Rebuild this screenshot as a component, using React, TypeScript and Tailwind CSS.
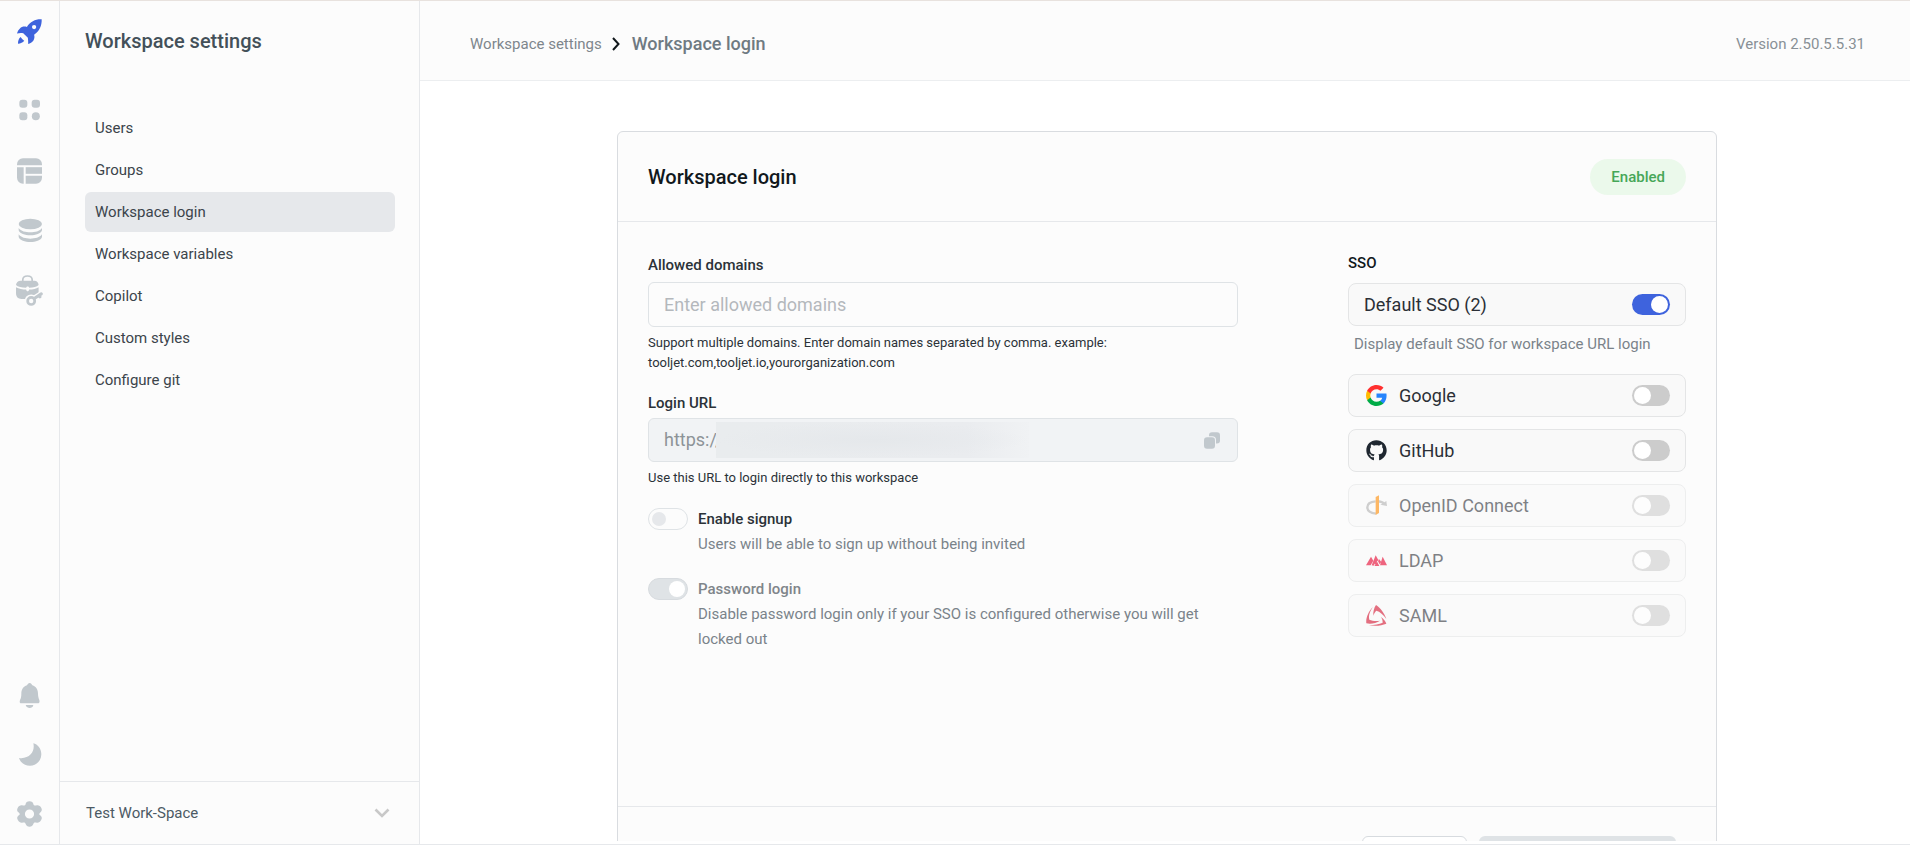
import React, { useState } from "react";
import { FaGithub } from "react-icons/fa";

const NAV = ["Users", "Groups", "Workspace login", "Workspace variables", "Copilot", "Custom styles", "Configure git"];

function RocketIcon() {
  return (
    <svg viewBox="0 0 76 76" className="size-[25px]" fill="#3e63dd">
      <path
        fillRule="evenodd"
        d="M75 1C56 0 41 8 30 24C22 22 14 23 9 29C5 33 2 37 0 44C7 42 13 42 19 43L33 57C34 63 34 69 34 76C40 74 46 71 50 65C53 60 54 54 52 48C68 37 76 20 75 1ZM52 18A6.500 6.500 0 1 1 52 31A6.500 6.500 0 1 1 52 18Z"
      />
      <path d="M11 55C15 60 18 64 22 66C18 72 11 74 3 75C3 67 5 60 11 55Z" />
    </svg>
  );
}

function AppsIcon() {
  return (
    <svg viewBox="0 0 75 75" className="size-[25px]" fill="#c1c8cd">
      <rect x="7" y="5" width="24" height="24" rx="9" />
      <rect x="44" y="5" width="25" height="24" rx="9" />
      <rect x="7" y="43" width="24" height="24" rx="9" />
      <circle cx="56.500" cy="55" r="12" />
    </svg>
  );
}

function TableIcon() {
  return (
    <svg viewBox="0 0 75 77" className="h-[26px] w-[25px]" fill="#c1c8cd">
      <path d="M18 0H57A18 18 0 0 1 75 18V21H0V18A18 18 0 0 1 18 0Z" />
      <path d="M0 27H20V77H18A18 18 0 0 1 0 59Z" />
      <path d="M26 27H75V47H26Z" />
      <path d="M26 53H75V59A18 18 0 0 1 57 77H26Z" />
    </svg>
  );
}

function DatabaseIcon() {
  return (
    <svg viewBox="0 0 75 75" className="size-[25px]" fill="#c1c8cd">
      <ellipse cx="40" cy="18" rx="35" ry="15.500" />
      <path d="M5 30C12 40 26 43 40 43S68 40 75 30V37C72 47 56 52 40 52S8 47 5 37Z" />
      <path d="M5 49C12 59 26 62 40 62S68 59 75 49V57C72 67 56 72 40 72S8 67 5 57Z" />
    </svg>
  );
}

function ToolboxIcon() {
  return (
    <svg viewBox="0 0 80 92" className="h-[31px] w-[27px]" fill="#c1c8cd">
      <path d="M20 20V15C20 7 26 3 34 3S48 7 48 15V20" fill="none" stroke="#c1c8cd" strokeWidth="5" />
      <path d="M14 17H54C62 17 67 23 67 30C62 36 51 38 39 38C38 33 31 33 30 38C17 38 5 36 0 30C0 23 6 17 14 17Z" />
      <path d="M0 36C8 41 20 43 30 43C31 50 38 50 39 43C50 43 60 41 67 36V54C67 64 61 71 51 71H16C6 71 0 64 0 54Z" />
      <g fill="none" stroke="#fcfcfc" strokeWidth="17" strokeLinecap="round">
        <circle cx="45" cy="77" r="11" />
        <path d="M55 69L74 57" />
      </g>
      <circle cx="45" cy="77" r="10.500" fill="none" stroke="#c1c8cd" strokeWidth="8" />
      <path d="M54 70L75 56M68 61L71 65" fill="none" stroke="#c1c8cd" strokeWidth="9" strokeLinecap="round" />
    </svg>
  );
}

function BellIcon() {
  return (
    <svg viewBox="0 0 75 75" className="size-[25px]" fill="#c1c8cd">
      <path d="M38 0C42 0 44 3 46 7C57 10 63 20 63 32C63 40 65 45 67 51C69 58 67 61 61 61H14C8 61 7 58 9 51C12 45 13 40 13 32C13 20 19 10 30 7C32 3 34 0 38 0Z" />
      <path d="M26 66H49C48 73 43 75 38 75S28 73 26 66Z" />
    </svg>
  );
}

function MoonIcon() {
  return (
    <svg viewBox="0 0 75 75" className="size-[25px]" fill="#c1c8cd">
      <path d="M49 4C62 7 73 20 73 37C73 56 58 71 39 71C23 71 10 62 6 48C20 50 33 46 41 37C49 28 52 16 49 4Z" />
    </svg>
  );
}

function GearIcon() {
  return (
    <svg viewBox="0 0 76 78" className="h-[26px] w-[25px]" fill="#c1c8cd">
      <path
        fillRule="evenodd"
        d="M38 0C45 0 49 3 50 9C51 13 54 14 58 13C65 11 71 14 74 21C77 27 75 32 70 35C67 38 67 41 70 43C76 47 77 52 73 58C70 64 64 67 58 65C54 64 51 65 50 69C48 75 44 78 38 78S28 75 26 69C25 65 22 64 18 65C12 67 6 64 3 58C-1 52 0 47 6 43C9 41 9 38 6 35C0 32 -1 27 2 21C5 14 11 11 18 13C22 14 25 13 26 9C27 3 31 0 38 0ZM38 25A14 14 0 1 0 38 53A14 14 0 1 0 38 25Z"
      />
    </svg>
  );
}

function GoogleIcon() {
  return (
    <svg viewBox="1 1 22 22" className="size-[21px]">
      <path fill="#2684fc" d="M22.560 12.250c0-.780-.070-1.530-.200-2.250H12v4.260h5.920c-.260 1.370-1.040 2.530-2.210 3.310v2.770h3.570c2.080-1.920 3.280-4.740 3.280-8.090z" />
      <path fill="#00ac47" d="M12 23c2.970 0 5.460-.980 7.280-2.660l-3.570-2.770c-.980.660-2.230 1.060-3.710 1.060-2.860 0-5.290-1.930-6.160-4.530H2.180v2.840C3.990 20.530 7.700 23 12 23z" />
      <path fill="#ffba00" d="M5.840 14.090c-.220-.660-.350-1.360-.350-2.090s.130-1.430.350-2.090V7.070H2.180C1.430 8.550 1 10.220 1 12s.430 3.450 1.180 4.930l3.660-2.840z" />
      <path fill="#ff302f" d="M12 5.380c1.620 0 3.060.560 4.210 1.640l3.150-3.150C17.450 2.090 14.970 1 12 1 7.700 1 3.990 3.470 2.180 7.070l3.660 2.840c.870-2.600 3.300-4.530 6.160-4.530z" />
    </svg>
  );
}

function OpenIdIcon() {
  return (
    <svg viewBox="0 0 63 63" className="size-[21px]">
      <path d="M29 19C12 20 4 28 4 37C4 47 14 54 30 56" fill="none" stroke="#b0b0b0" strokeWidth="7" />
      <path d="M39 16C46 17 51 19 55 22L61 18L63 33L43 29L49 26C46 24 43 23 39 23Z" fill="#b0b0b0" />
      <path d="M29 6L39 1V54L29 60Z" fill="#ff8a00" />
    </svg>
  );
}

function LdapIcon() {
  return (
    <svg viewBox="0 0 63 63" className="size-[21px]" fill="#e6002c">
      <path d="M0 46L15 20L22 32L14 46Z" />
      <path d="M17 46L29 16L37 30L32 36L37 47L26 41L23 47Z" />
      <path d="M36 34L39 27L46 36L41 43Z" />
      <path d="M26 46L34 36L40 48H26Z" />
      <path d="M42 46L50 20L63 46Z" />
    </svg>
  );
}

function SamlIcon() {
  return (
    <svg viewBox="0 0 63 63" className="size-[21px]" fill="#d4122e">
      <path d="M30 0C41 7 55 23 61 42C52 29 42 20 31 17C27 20 24 26 22 32C21 20 24 9 30 0Z" />
      <path d="M20 7C10 22 7 34 10 44C19 48 30 49 42 47C30 55 14 58 1 55C-1 40 7 20 20 7Z" />
      <path d="M45 36C53 42 59 49 61 56C47 62 26 64 9 60C25 60 40 58 50 53C50 47 49 42 45 36Z" />
    </svg>
  );
}

function CopyIcon() {
  return (
    <svg viewBox="0 0 48 50" className="h-[17px] w-4">
      <rect x="15" y="0" width="33" height="34" rx="9" fill="#c1c8cd" />
      <rect x="-3" y="12" width="39" height="41" rx="11" fill="#f1f3f5" />
      <rect x="0" y="15" width="33" height="35" rx="9" fill="#c1c8cd" />
    </svg>
  );
}

type Provider = { id: string; name: string; icon?: React.ReactNode; disabled?: boolean };

const PROVIDERS: Provider[] = [
  { id: "google", name: "Google", icon: <GoogleIcon /> },
  { id: "github", name: "GitHub", icon: <FaGithub className="size-[21px] text-[#1f2730]" /> },
  { id: "openid", name: "OpenID Connect", icon: <OpenIdIcon />, disabled: true },
  { id: "ldap", name: "LDAP", icon: <LdapIcon />, disabled: true },
  { id: "saml", name: "SAML", icon: <SamlIcon />, disabled: true },
];

function ProviderRow({ id, name, icon, disabled, defaultChecked }: Provider & { defaultChecked?: boolean }) {
  return (
    <label
      htmlFor={id}
      className={`flex h-[43px] items-center rounded-lg border border-[#e4e5e6] bg-[#f9f9f9] px-[15px] ${disabled ? "opacity-60" : ""}`}
    >
      {icon && <span className="mr-3 ml-0.5">{icon}</span>}
      <span className="flex-1 text-lg leading-6 text-[#2b2f36]">{name}</span>
      <input
        id={id}
        type="checkbox"
        role="switch"
        disabled={disabled}
        defaultChecked={defaultChecked}
        className="h-[21px] w-[38px] appearance-none rounded-full bg-[#cccccc] p-0.5 before:block before:size-[17px] before:rounded-full before:bg-white checked:bg-[#3e63dd] checked:before:translate-x-[17px]"
      />
    </label>
  );
}

const RAIL_BUTTON = "flex size-[49px] items-center justify-center";

export default function App() {
  const [active, setActive] = useState("Workspace login");

  return (
    <div className="flex h-screen flex-col overflow-hidden border-t border-b border-t-[#e8e2de] border-b-[#e6e8eb] bg-white font-[Roboto,sans-serif] text-[15px] leading-5">
      <div className="flex min-h-0 flex-1">
        <aside className="flex w-[60px] shrink-0 flex-col items-center border-r border-[#e6e8eb] bg-[#fcfcfc]">
          <a href="#home" aria-label="Home" className="flex h-[60px] items-center justify-center">
            <RocketIcon />
          </a>
          <nav aria-label="Main" className="mt-[25px] flex flex-col gap-[11px]">
            <a href="#apps" aria-label="Apps" className={RAIL_BUTTON}><AppsIcon /></a>
            <a href="#tables" aria-label="Tables" className={RAIL_BUTTON}><TableIcon /></a>
            <a href="#data" aria-label="Data sources" className={RAIL_BUTTON}><DatabaseIcon /></a>
            <a href="#constants" aria-label="Workspace constants" className={RAIL_BUTTON}><ToolboxIcon /></a>
          </nav>
          <div className="mt-auto mb-1.5 flex flex-col gap-[10px]">
            <button type="button" aria-label="Notifications" className={RAIL_BUTTON}><BellIcon /></button>
            <button type="button" aria-label="Dark mode" className={RAIL_BUTTON}><MoonIcon /></button>
            <button type="button" aria-label="Settings" className={RAIL_BUTTON}><GearIcon /></button>
          </div>
        </aside>

        <aside className="flex w-[360px] shrink-0 flex-col border-r border-[#e6e8eb] bg-[#fcfcfc]">
          <h2 className="px-[25px] pt-6 text-xl leading-8 font-medium text-[#435059]">Workspace settings</h2>
          <nav aria-label="Workspace settings" className="mt-[51px] flex flex-col gap-0.5 pr-6 pl-[25px]">
            {NAV.map((item) => (
              <a
                key={item}
                href={`#${item.toLowerCase().replace(" ", "-")}`}
                onClick={() => setActive(item)}
                className={`flex h-10 items-center rounded-md px-[10px] text-[#3b444b] ${item === active ? "bg-[#e6e8eb]" : ""}`}
              >
                {item}
              </a>
            ))}
          </nav>
          <button
            type="button"
            className="mt-auto flex h-[63px] items-center justify-between border-t border-[#e6e8eb] pr-[29px] pl-[26px] text-[#4c5a64]"
          >
            Test Work-Space
            <svg viewBox="0 0 16 10" className="h-[10px] w-4" fill="none" stroke="#c8c8c8" strokeWidth="2.600">
              <path d="M1.500 1.500L8 8L14.500 1.500" />
            </svg>
          </button>
        </aside>

        <div className="flex min-w-0 flex-1 flex-col">
          <header className="flex h-20 shrink-0 items-center justify-between border-b border-[#eceef0] bg-[#fcfcfc] pt-1.5 pr-[45px] pl-[50px] text-[#7e868c]">
            <nav aria-label="Breadcrumb" className="flex items-center">
              <a href="#settings">Workspace settings</a>
              <svg viewBox="0 0 8 14" className="mr-3 ml-[10px] h-[14px] w-2" fill="none" stroke="#11181c" strokeWidth="2">
                <path d="M1 1L6.500 7L1 13" />
              </svg>
              <span className="text-lg leading-6 font-medium text-[#6f7a82]">Workspace login</span>
            </nav>
            <span className="text-[#889096]">Version 2.50.5.5.31</span>
          </header>

          <main className="mb-[3px] min-h-0 flex-1 overflow-hidden pt-[50px] pl-1">
            <form className="mx-auto max-w-[1100px] rounded-t-md border border-[#d9dce0] bg-[#fcfcfc]">
              <div className="flex h-[90px] items-center justify-between border-b border-[#e6e8eb] px-[30px]">
                <h1 className="text-xl leading-8 font-medium text-[#11181c]">Workspace login</h1>
                <span className="rounded-full bg-[#ebf9eb] px-[21px] py-2 leading-5 font-medium text-[#46a758]">Enabled</span>
              </div>

              <div className="flex min-h-[585px] justify-between border-b border-[#e6e8eb] px-[30px] pt-8">
                <div className="w-[590px]">
                  <label htmlFor="domains" className="mb-1.5 block leading-[22px] font-medium text-[#2b3238]">Allowed domains</label>
                  <input
                    id="domains"
                    type="text"
                    placeholder="Enter allowed domains"
                    className="h-[45px] w-full rounded-md border border-[#dfe3e6] bg-[#fcfcfc] px-[15px] text-lg placeholder:text-[#b4b8bc]"
                  />
                  <p className="mt-1.5 text-[13px] text-[#2b3238]">
                    Support multiple domains. Enter domain names separated by comma. example: tooljet.com,tooljet.io,yourorganization.com
                  </p>

                  <label htmlFor="login-url" className="mt-[19px] mb-1 block leading-[22px] font-medium text-[#2b3238]">Login URL</label>
                  <div className="relative flex h-11 items-center rounded-md border border-[#dfe3e6] bg-[#f1f3f5] pr-[17px] pl-[15px]">
                    <input id="login-url" type="text" readOnly value="https://" className="min-w-0 flex-1 text-lg text-[#8d9398]" />
                    <div className="absolute left-[67px] h-9 w-[313px] bg-linear-to-r from-[#e9ecee] via-[#eaecef] via-80% to-[#f0f2f4]">
                      <div className="h-full bg-radial from-[#e5e8eb] to-transparent to-70%" />
                    </div>
                    <button type="button" aria-label="Copy login URL"><CopyIcon /></button>
                  </div>
                  <p className="mt-1.5 text-[13px] text-[#2b3238]">Use this URL to login directly to this workspace</p>

                  <div className="mt-5 flex flex-col gap-[21px]">
                    <div className="flex gap-[10px]">
                      <input
                        id="signup"
                        type="checkbox"
                        role="switch"
                        className="h-[22px] w-10 shrink-0 appearance-none rounded-full border border-[#dfe3e6] bg-[#fcfcfc] p-[3px] before:block before:size-[14px] before:rounded-full before:bg-[#e6e8eb] checked:before:translate-x-[18px]"
                      />
                      <div>
                        <label htmlFor="signup" className="block leading-[22px] font-medium text-[#2b3238]">Enable signup</label>
                        <p className="mt-0.5 leading-[25px] text-[#7a838a]">Users will be able to sign up without being invited</p>
                      </div>
                    </div>
                    <div className="flex gap-[10px]">
                      <input
                        id="password-login"
                        type="checkbox"
                        role="switch"
                        defaultChecked
                        disabled
                        className="h-[22px] w-10 shrink-0 appearance-none rounded-full border border-[#d7dbdf] bg-[#dfe3e6] p-0.5 before:block before:size-4 before:rounded-full before:bg-white checked:before:translate-x-[18px]"
                      />
                      <div>
                        <label htmlFor="password-login" className="block leading-[22px] font-medium text-[#7f858a]">Password login</label>
                        <p className="mt-0.5 leading-[25px] text-[#7a838a]">
                          Disable password login only if your SSO is configured otherwise you will get locked out
                        </p>
                      </div>
                    </div>
                  </div>
                </div>

                <section aria-labelledby="sso-title" className="w-[338px]">
                  <h2 id="sso-title" className="mb-[11px] leading-[18px] font-medium text-[#11181c]">SSO</h2>
                  <ProviderRow id="default-sso" name="Default SSO (2)" defaultChecked />
                  <p className="mt-2 px-1.5 text-[#7a838a]">Display default SSO for workspace URL login</p>
                  <div className="mt-5 flex flex-col gap-3">
                    {PROVIDERS.map((provider) => (
                      <ProviderRow key={provider.id} {...provider} />
                    ))}
                  </div>
                </section>
              </div>

              <div className="flex justify-end gap-3 px-10 py-[29px]">
                <button type="button" aria-label="Cancel" className="h-10 w-[105px] rounded-md border border-[#d7dbdf] bg-white" />
                <button type="submit" aria-label="Save changes" disabled className="h-10 w-[197px] rounded-md bg-[#dfe3e6]" />
              </div>
            </form>
          </main>
        </div>
      </div>
    </div>
  );
}
